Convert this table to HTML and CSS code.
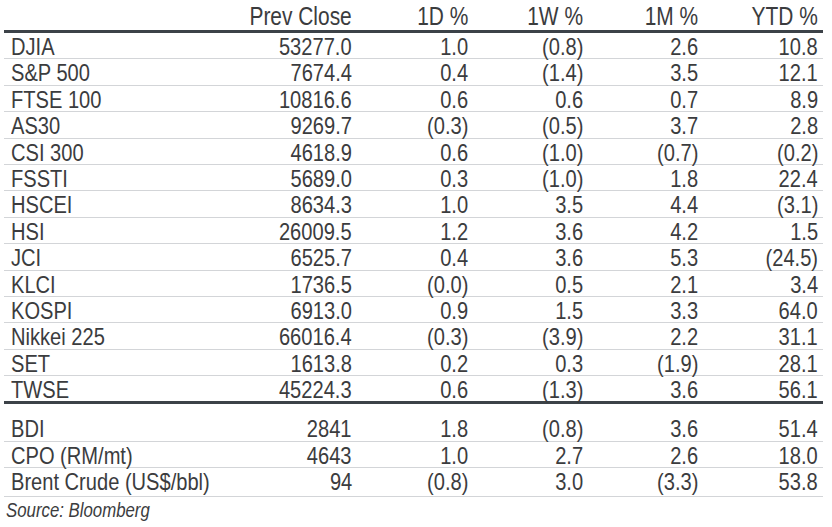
FILE: index.html
```html
<!DOCTYPE html>
<html>
<head>
<meta charset="utf-8">
<link rel="stylesheet" href="styles.css">
</head>
<body>
<div class="sheet">
  <div class="row head">
    <div class="c name"></div>
    <div class="c"><span>Prev Close</span></div>
    <div class="c"><span>1D %</span></div>
    <div class="c"><span>1W %</span></div>
    <div class="c"><span>1M %</span></div>
    <div class="c"><span>YTD %</span></div>
  </div>
  <div class="group">
    <div class="row"><div class="c name"><span>DJIA</span></div><div class="c"><span>53277.0</span></div><div class="c"><span>1.0</span></div><div class="c"><span>(0.8)</span></div><div class="c"><span>2.6</span></div><div class="c"><span>10.8</span></div></div>
    <div class="row"><div class="c name"><span>S&amp;P 500</span></div><div class="c"><span>7674.4</span></div><div class="c"><span>0.4</span></div><div class="c"><span>(1.4)</span></div><div class="c"><span>3.5</span></div><div class="c"><span>12.1</span></div></div>
    <div class="row"><div class="c name"><span>FTSE 100</span></div><div class="c"><span>10816.6</span></div><div class="c"><span>0.6</span></div><div class="c"><span>0.6</span></div><div class="c"><span>0.7</span></div><div class="c"><span>8.9</span></div></div>
    <div class="row"><div class="c name"><span>AS30</span></div><div class="c"><span>9269.7</span></div><div class="c"><span>(0.3)</span></div><div class="c"><span>(0.5)</span></div><div class="c"><span>3.7</span></div><div class="c"><span>2.8</span></div></div>
    <div class="row"><div class="c name"><span>CSI 300</span></div><div class="c"><span>4618.9</span></div><div class="c"><span>0.6</span></div><div class="c"><span>(1.0)</span></div><div class="c"><span>(0.7)</span></div><div class="c"><span>(0.2)</span></div></div>
    <div class="row"><div class="c name"><span>FSSTI</span></div><div class="c"><span>5689.0</span></div><div class="c"><span>0.3</span></div><div class="c"><span>(1.0)</span></div><div class="c"><span>1.8</span></div><div class="c"><span>22.4</span></div></div>
    <div class="row"><div class="c name"><span>HSCEI</span></div><div class="c"><span>8634.3</span></div><div class="c"><span>1.0</span></div><div class="c"><span>3.5</span></div><div class="c"><span>4.4</span></div><div class="c"><span>(3.1)</span></div></div>
    <div class="row"><div class="c name"><span>HSI</span></div><div class="c"><span>26009.5</span></div><div class="c"><span>1.2</span></div><div class="c"><span>3.6</span></div><div class="c"><span>4.2</span></div><div class="c"><span>1.5</span></div></div>
    <div class="row"><div class="c name"><span>JCI</span></div><div class="c"><span>6525.7</span></div><div class="c"><span>0.4</span></div><div class="c"><span>3.6</span></div><div class="c"><span>5.3</span></div><div class="c"><span>(24.5)</span></div></div>
    <div class="row"><div class="c name"><span>KLCI</span></div><div class="c"><span>1736.5</span></div><div class="c"><span>(0.0)</span></div><div class="c"><span>0.5</span></div><div class="c"><span>2.1</span></div><div class="c"><span>3.4</span></div></div>
    <div class="row"><div class="c name"><span>KOSPI</span></div><div class="c"><span>6913.0</span></div><div class="c"><span>0.9</span></div><div class="c"><span>1.5</span></div><div class="c"><span>3.3</span></div><div class="c"><span>64.0</span></div></div>
    <div class="row"><div class="c name"><span>Nikkei 225</span></div><div class="c"><span>66016.4</span></div><div class="c"><span>(0.3)</span></div><div class="c"><span>(3.9)</span></div><div class="c"><span>2.2</span></div><div class="c"><span>31.1</span></div></div>
    <div class="row"><div class="c name"><span>SET</span></div><div class="c"><span>1613.8</span></div><div class="c"><span>0.2</span></div><div class="c"><span>0.3</span></div><div class="c"><span>(1.9)</span></div><div class="c"><span>28.1</span></div></div>
    <div class="row last"><div class="c name"><span>TWSE</span></div><div class="c"><span>45224.3</span></div><div class="c"><span>0.6</span></div><div class="c"><span>(1.3)</span></div><div class="c"><span>3.6</span></div><div class="c"><span>56.1</span></div></div>
  </div>
  <div class="group commod">
    <div class="row"><div class="c name"><span>BDI</span></div><div class="c"><span>2841</span></div><div class="c"><span>1.8</span></div><div class="c"><span>(0.8)</span></div><div class="c"><span>3.6</span></div><div class="c"><span>51.4</span></div></div>
    <div class="row"><div class="c name"><span>CPO (RM/mt)</span></div><div class="c"><span>4643</span></div><div class="c"><span>1.0</span></div><div class="c"><span>2.7</span></div><div class="c"><span>2.6</span></div><div class="c"><span>18.0</span></div></div>
    <div class="row tall"><div class="c name"><span>Brent Crude (US$/bbl)</span></div><div class="c"><span>94</span></div><div class="c"><span>(0.8)</span></div><div class="c"><span>3.0</span></div><div class="c"><span>(3.3)</span></div><div class="c"><span>53.8</span></div></div>
  </div>
  <div class="source"><span>Source: Bloomberg</span></div>
</div>
</body>
</html>
```

FILE: styles.css
```css
html, body {
  margin: 0;
  padding: 0;
  background: #ffffff;
}

.sheet {
  width: 819px;
  margin-left: 4px;
  font-family: "Liberation Sans", Arial, sans-serif;
  font-size: 24.5px;
  color: #3b3c3e;
}

.row {
  display: grid;
  grid-template-columns: 228px 125px 116px 115px 115px 120px;
  height: 26.4px;
  box-sizing: border-box;
  padding-top: 3px;
  line-height: 22.4px;
  border-bottom: 1px solid #d3d5d8;
  white-space: nowrap;
}

.row.head {
  height: 33px;
  padding-top: 4px;
  line-height: 24px;
  font-size: 25.5px;
  border-bottom: 3px solid #3c4248;
}

.row.last {
  border-bottom: 3px solid #3c4248;
  height: 28.4px;
}

.row.tall {
  height: 29px;
}

.c {
  display: flex;
  justify-content: flex-end;
  min-width: 0;
  padding-right: 5px;
}

.c span {
  display: inline-block;
  flex: none;
  transform: scaleX(0.82);
  transform-origin: right center;
}

.c.name {
  justify-content: flex-start;
  padding-left: 7px;
  padding-right: 0;
}

.c.name span {
  transform-origin: left center;
}

.commod {
  margin-top: 11px;
}

.source {
  font-style: italic;
  font-size: 20px;
  line-height: 24px;
  margin-left: 2px;
  margin-top: 1px;
}

.source span {
  display: inline-block;
  transform: scaleX(0.84);
  transform-origin: left center;
}
```
